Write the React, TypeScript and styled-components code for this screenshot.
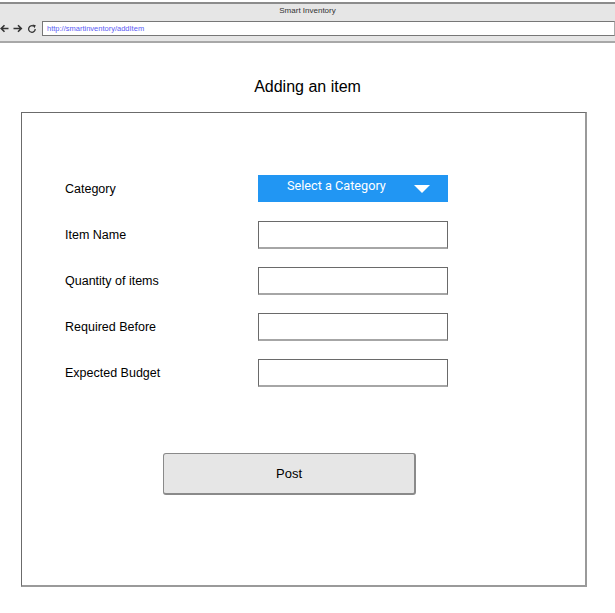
import React from "react";
import styled, { createGlobalStyle } from "styled-components";

const Global = createGlobalStyle`
  html, body { margin: 0; padding: 0; background: #fff; }
  body { font-family: "Liberation Sans", Arial, sans-serif; color: #000; }
`;

const Page = styled.div`
  width: 615px;
  height: 613px;
  display: flex;
  flex-direction: column;
  overflow: hidden;
`;

const Chrome = styled.div`
  margin-top: 2px;
  height: 37px;
  background: #e6e6e6;
  border-top: 2px solid #8c8c8c;
  border-bottom: 2px solid #a8a8a8;
  display: flex;
  flex-direction: column;
`;

const WindowTitle = styled.div`
  height: 16px;
  font-size: 8px;
  line-height: 14px;
  text-align: center;
  color: #333;
`;

const NavRow = styled.div`
  display: flex;
  align-items: center;
  height: 17px;
`;

const NavIcons = styled.div`
  display: flex;
  align-items: center;
  gap: 4px;
  width: 42px;
  color: #333;
`;

const Address = styled.div`
  flex: 1;
  height: 15px;
  background: #fff;
  border: 1px solid #777;
  border-right-color: #aaa;
  box-sizing: border-box;
  font-size: 7.5px;
  line-height: 13px;
  padding-left: 4px;
  color: #5b5bf5;
`;

const Title = styled.h1`
  margin: 35px 0 0;
  font-size: 16px;
  font-weight: normal;
  text-align: center;
  line-height: 18px;
`;

const Panel = styled.div`
  margin: 16px 0 0 21px;
  width: 566px;
  height: 475px;
  box-sizing: border-box;
  border: 1px solid #6b6b6b;
  border-right: 2px solid #9a9a9a;
  border-bottom: 2px solid #9a9a9a;
  padding: 62px 0 0 43px;
  display: flex;
  flex-direction: column;
`;

const Form = styled.div`
  display: grid;
  grid-template-columns: 193px 190px;
  grid-auto-rows: 28px;
  row-gap: 18px;
  align-items: center;
`;

const Label = styled.label`
  font-size: 12.5px;
  line-height: 14px;
`;

const SelectBox = styled.div`
  height: 27px;
  align-self: start;
  background: #2196f3;
  color: #fff;
  font-family: Roboto, "Liberation Sans", sans-serif;
  font-size: 12.7px;
  display: flex;
  align-items: flex-start;
  padding: 3px 18px 0 29px;
  box-sizing: border-box;
  justify-content: space-between;
`;

const Caret = styled.svg`
  margin-top: 7px;
`;

const Input = styled.input`
  height: 28px;
  width: 190px;
  box-sizing: border-box;
  border: 1px solid #6a6a6a;
  border-bottom: 2px solid #a6a6a6;
  background: #fff;
  margin: 0;
  padding: 0 4px;
  outline: none;
`;

const PostButton = styled.button`
  margin: 66px 0 0 98px;
  width: 253px;
  height: 42px;
  background: #e6e6e6;
  border: 1px solid #8a8a8a;
  border-right-width: 2px;
  border-bottom-width: 2px;
  border-radius: 3px;
  font-family: "Liberation Sans", Arial, sans-serif;
  font-size: 13px;
  color: #000;
  padding: 0;
`;

const fields = ["Item Name", "Quantity of items", "Required Before", "Expected Budget"];

export default function App() {
  return (
    <Page>
      <Global />
      <Chrome>
        <WindowTitle>Smart Inventory</WindowTitle>
        <NavRow>
          <NavIcons>
            <svg width="9" height="9" viewBox="0 0 9 9">
              <path d="M8.5 4.5H1.5M4.5 1.2L1.2 4.5L4.5 7.8" stroke="#333" strokeWidth="1.6" fill="none" />
            </svg>
            <svg width="10" height="9" viewBox="0 0 10 9">
              <path d="M0.5 4.5H8M5 1.2L8.3 4.5L5 7.8" stroke="#333" strokeWidth="1.6" fill="none" />
            </svg>
            <svg width="10" height="10" viewBox="0 0 10 10">
              <path d="M8.2 5A3.3 3.3 0 1 1 6.8 2.3" stroke="#333" strokeWidth="1.3" fill="none" />
              <path d="M5.6 0.6L8.8 1.2L7.4 4.2Z" fill="#333" />
            </svg>
          </NavIcons>
          <Address>http://smartinventory/addItem</Address>
        </NavRow>
      </Chrome>
      <Title>Adding an item</Title>
      <Panel>
        <Form>
          <Label>Category</Label>
          <SelectBox>
            <span>Select a Category</span>
            <Caret width="16" height="8" viewBox="0 0 16 8">
              <path d="M0 0H16L8 8Z" fill="#fff" />
            </Caret>
          </SelectBox>
          {fields.map((f) => (
            <React.Fragment key={f}>
              <Label>{f}</Label>
              <Input />
            </React.Fragment>
          ))}
        </Form>
        <PostButton>Post</PostButton>
      </Panel>
    </Page>
  );
}
